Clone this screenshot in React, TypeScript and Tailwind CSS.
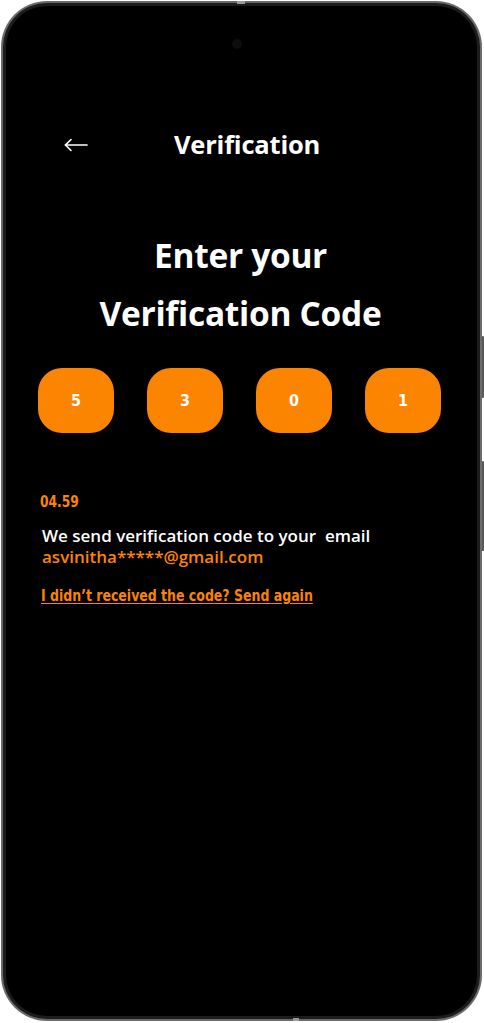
const codes = ['5', '3', '0', '1']

export default function App() {
  return (
    <div className="w-[484px] h-[1023px] bg-white pt-px pl-px">
      {/* Phone frame */}
      <div className="relative w-[481px] h-[1020px] rounded-[46px] bg-[#6b6b6b] p-[2px]">
        {/* side buttons */}
        <div className="absolute right-[-3px] top-[335px] w-[3px] h-[62px] rounded-r bg-[#5a5a5a]" />
        <div className="absolute right-[-3px] top-[460px] w-[3px] h-[90px] rounded-r bg-[#5a5a5a]" />
        <div className="absolute left-[236px] top-0 w-[8px] h-[3px] bg-[#9a9a9a]" />
        <div className="absolute left-[292px] bottom-0 w-[6px] h-[3px] bg-[#9a9a9a]" />
        <div className="w-full h-full rounded-[44px] bg-[#1c1c1c] p-[3px]">
          <div className="flex flex-col w-full h-full rounded-[41px] bg-black pl-[32px] pr-[36px] font-['Open_Sans',sans-serif]">
            {/* camera */}
            <div className="self-center ml-[-6px] mt-[33px] w-[10px] h-[10px] rounded-full bg-[#0d0d0d]" />

            {/* Header */}
            <div className="flex items-center mt-[73px] h-[45px]">
              <svg className="ml-[26px]" width="24" height="14" viewBox="0 0 24 14" fill="none" stroke="white" strokeWidth="1.6" strokeLinecap="round">
                <path d="M23 7H1.5" />
                <path d="M7 1.5L1.5 7L7 12.5" />
              </svg>
              <h2 className="ml-[86px] text-[25.5px] font-bold text-white leading-none tracking-[-0.2px]">
                Verification
              </h2>
            </div>

            {/* Title */}
            <h1 className="mt-[59px] ml-[2px] text-center text-[33.5px] font-bold text-white leading-[58px] tracking-[-0.3px]">
              Enter your
              <br />
              Verification Code
            </h1>

            {/* Code boxes */}
            <div className="mt-[26px] flex justify-between">
              {codes.map((c, i) => (
                <div
                  key={i}
                  className="w-[76px] h-[65px] rounded-[24px] bg-[#fb8500] flex items-center justify-center text-white text-[16px] font-bold font-['DejaVu_Sans_Condensed','DejaVu_Sans',sans-serif]"
                >
                  {c}
                </div>
              ))}
            </div>

            {/* Timer */}
            <p className="mt-[58px] ml-[2px] text-[16px] font-bold leading-[22px] text-[#fb8500] font-['DejaVu_Sans_Condensed','DejaVu_Sans',sans-serif] scale-x-[0.85] origin-left">
              04.59
            </p>

            <div className="mt-[12px] ml-[4px] flex flex-col text-[17px] font-semibold leading-[21px]">
              <p className="text-white whitespace-pre">{'We send verification code to your  email'}</p>
              <p className="text-[#fb8500]">asvinitha*****@gmail.com</p>
            </div>

            <a
              href="#"
              className="block mt-[18px] ml-[3px] text-[16px] font-bold leading-[22px] text-[#fb8500] underline underline-offset-2 font-['DejaVu_Sans_Condensed','DejaVu_Sans',sans-serif] scale-x-[0.87] origin-left whitespace-nowrap"
            >
              I didn’t received the code? Send again
            </a>
          </div>
        </div>
      </div>
    </div>
  )
}
